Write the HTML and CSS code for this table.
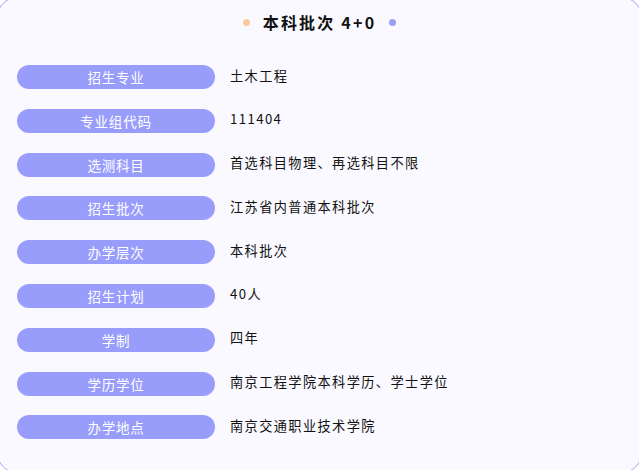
FILE: index.html
```html
<!DOCTYPE html>
<html lang="zh">
<head>
<meta charset="utf-8">
<link rel="stylesheet" href="styles.css">
</head>
<body>
<div class="card">
  <div class="title">
    <span class="dot dot-peach"></span>
    <span class="title-text">本科批次 4+0</span>
    <span class="dot dot-blue"></span>
  </div>
  <div class="rows">
    <div class="row"><span class="label">招生专业</span><span class="value">土木工程</span></div>
    <div class="row"><span class="label">专业组代码</span><span class="value">111404</span></div>
    <div class="row"><span class="label">选测科目</span><span class="value">首选科目物理、再选科目不限</span></div>
    <div class="row"><span class="label">招生批次</span><span class="value">江苏省内普通本科批次</span></div>
    <div class="row"><span class="label">办学层次</span><span class="value">本科批次</span></div>
    <div class="row"><span class="label">招生计划</span><span class="value">40人</span></div>
    <div class="row"><span class="label">学制</span><span class="value">四年</span></div>
    <div class="row"><span class="label">学历学位</span><span class="value">南京工程学院本科学历、学士学位</span></div>
    <div class="row"><span class="label">办学地点</span><span class="value">南京交通职业技术学院</span></div>
  </div>
</div>
</body>
</html>
```
FILE: styles.css
```css
html, body {
  margin: 0;
  padding: 0;
  background: #ffffff;
  overflow: hidden;
}
body {
  width: 639px;
  height: 470px;
  font-family: "Noto Sans CJK SC", "Noto Sans", sans-serif;
}
.card {
  box-sizing: border-box;
  margin: -3px 0 0 -3px;
  width: 645px;
  height: 476px;
  border: 1.5px solid #9ea3f6;
  border-radius: 20px;
  background: #f9f9ff;
  padding: 5px 3px 0 19px;
}
.title {
  height: 38px;
  display: flex;
  align-items: center;
  justify-content: center;
  gap: 13px;
  margin-left: -16px;
}
.title-text {
  font-size: 16px;
  font-weight: bold;
  color: #111;
  letter-spacing: 2.2px;
}
.dot {
  width: 7px;
  height: 7px;
  border-radius: 50%;
}
.dot-peach { background: #fdc99c; }
.dot-blue { background: #9a9ff7; }
.rows {
  display: flex;
  flex-direction: column;
  gap: 19.8px;
  padding-top: 24px;
}
.row {
  display: flex;
  align-items: center;
  height: 24px;
}
.label {
  width: 198px;
  height: 24px;
  line-height: 24px;
  border-radius: 12px;
  background: #989dfc;
  color: #fff;
  font-size: 13.5px;
  letter-spacing: 0.8px;
  text-align: center;
  flex: none;
}
.value {
  margin-left: 15px;
  font-size: 13.2px;
  letter-spacing: 1.4px;
  color: #111;
  position: relative;
  top: -2px;
}
```
